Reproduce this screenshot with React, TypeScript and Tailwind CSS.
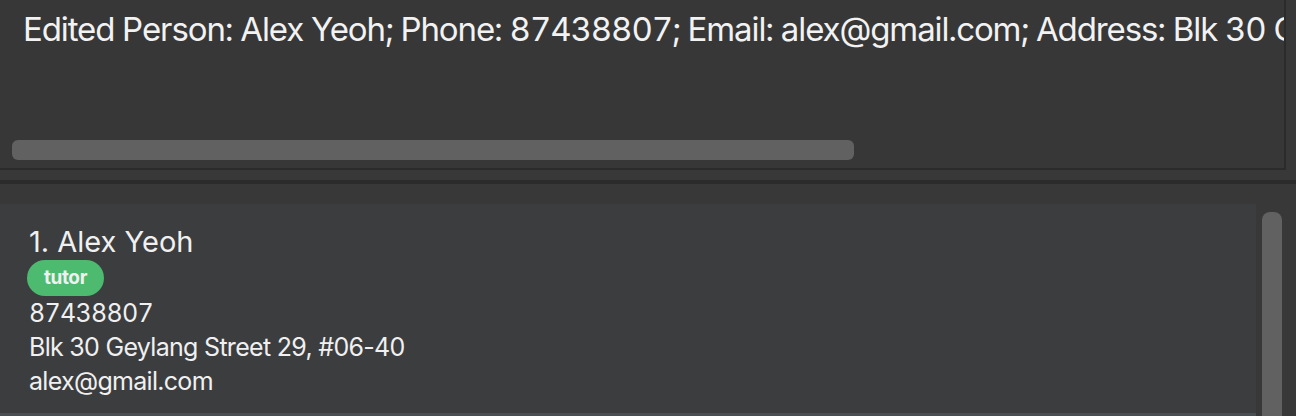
import React from "react";

export default function App() {
  return (
    <div
      className="w-[1296px] h-[416px] overflow-hidden bg-[#383838] flex flex-col"
      style={{ fontFamily: "Inter, 'Noto Sans', sans-serif" }}
    >
      {/* Result display */}
      <div className="h-[170px] w-[1286px] shrink-0 bg-[#373737] border-r-2 border-b-2 border-[#2b2b2b] relative overflow-hidden">
        <div className="pl-[23px] pt-[9px] text-[33px] leading-[40px] tracking-[-1.1px] tabular-nums text-[#f2f2f2] whitespace-nowrap">
          Edited Person: Alex Yeoh; Phone: 87438807; Email: alex@gmail.com; Address: Blk 30 Geylang Street 29, #06-40; Tags: [tutor]
        </div>
        <div className="absolute left-[12px] top-[140px] w-[842px] h-[20px] rounded-[6px] bg-[#616161]" />
      </div>
      <div className="h-[10px] shrink-0" />
      <div className="h-[4px] shrink-0 bg-[#2b2b2b]" />
      {/* List panel */}
      <div className="flex-1 flex pt-[20px]">
        <div className="w-[1256px] h-[212px] shrink-0 bg-[#3c3d3f] pl-[29px] pt-[20px] text-[#f0f0f0] border-b-[3px] border-[#4a4f53]">
          <div className="text-[29px] leading-[36px]">1. Alex Yeoh</div>
          <div className="ml-[-2px] inline-flex items-center justify-center w-[77px] h-[36px] rounded-full bg-[#4cbb6f] text-[19px] tracking-[-0.4px] font-bold text-[#f0f0f0]">
            tutor
          </div>
          <div className="text-[25px] leading-[34px] tracking-[-0.7px] tabular-nums">87438807</div>
          <div className="text-[25px] leading-[34px] tracking-[-0.7px]">Blk 30 Geylang Street 29, #06-40</div>
          <div className="text-[25px] leading-[34px] tracking-[-0.7px]">alex@gmail.com</div>
        </div>
        <div className="ml-[6px] mt-[8px] w-[20px] h-[220px] shrink-0 rounded-t-[8px] bg-[#616161]" />
      </div>
    </div>
  );
}
